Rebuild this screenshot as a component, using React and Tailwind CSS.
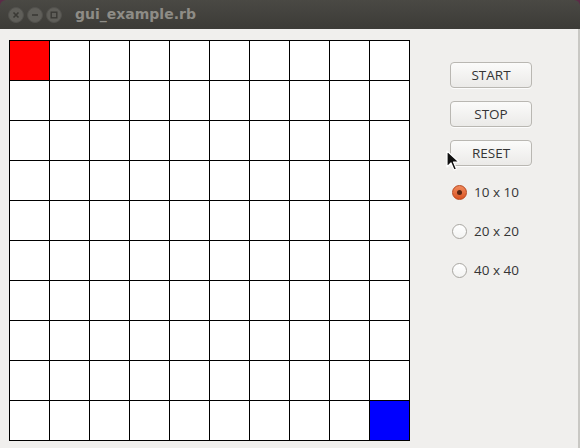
import React, { useState } from 'react';

const SIZE = 10;

function WinButton({ children }) {
  return (
    <div className="w-[16px] h-[16px] rounded-full bg-[#5f5e59] border border-[#52514d] flex items-center justify-center">
      <svg width="8" height="8" viewBox="0 0 8 8" className="text-[#3a3935]">
        {children}
      </svg>
    </div>
  );
}

function Button({ label }) {
  return (
    <button className="w-[82px] h-[26px] rounded-[4px] border border-[#b9b7b2] bg-gradient-to-b from-[#fbfbfa] to-[#ebeae8] text-[13.5px] text-[#353535] shadow-[0_1px_0_rgba(255,255,255,0.8)] flex items-center justify-center">
      {label}
    </button>
  );
}

function Radio({ label, checked, onClick }) {
  return (
    <div className="flex items-center h-[16px] cursor-default" onClick={onClick}>
      <div
        className={
          checked
            ? 'w-[15px] h-[15px] rounded-full bg-gradient-to-b from-[#f08a5c] to-[#d9521f] border border-[#b8451c] flex items-center justify-center'
            : 'w-[15px] h-[15px] rounded-full bg-gradient-to-b from-white to-[#f3f3f2] border border-[#a8a6a1]'
        }
      >
        {checked && <div className="w-[5px] h-[5px] rounded-full bg-[#5a2612]" />}
      </div>
      <span className="ml-[7px] text-[13.5px] text-[#353535]">{label}</span>
    </div>
  );
}

export default function App() {
  const [size, setSize] = useState('10 x 10');
  const cells = [];
  for (let r = 0; r < SIZE; r++) {
    for (let c = 0; c < SIZE; c++) {
      let bg = 'bg-white';
      if (r === 0 && c === 0) bg = 'bg-[#ff0000]';
      if (r === SIZE - 1 && c === SIZE - 1) bg = 'bg-[#0000ff]';
      cells.push(<div key={r + '-' + c} className={`w-[39px] h-[39px] ${bg}`} />);
    }
  }

  return (
    <div className="w-[580px] h-[448px] bg-[#5b2b47] overflow-hidden relative" style={{ fontFamily: '"Open Sans", "DejaVu Sans", sans-serif' }}>
      {/* title bar */}
      <div className="h-[29px] rounded-t-[6px] bg-gradient-to-b from-[#4a4944] to-[#3c3b37] flex items-center pl-[8px]">
        <div className="flex gap-[3px]">
          <WinButton>
            <path d="M1.5 1.5 L6.5 6.5 M6.5 1.5 L1.5 6.5" stroke="currentColor" strokeWidth="1.6" />
          </WinButton>
          <WinButton>
            <path d="M1 4 L7 4" stroke="currentColor" strokeWidth="1.6" />
          </WinButton>
          <WinButton>
            <rect x="1.2" y="1.2" width="5.6" height="5.6" fill="none" stroke="currentColor" strokeWidth="1.4" />
          </WinButton>
        </div>
        <span className="ml-[13px] text-[14px] font-bold text-[#8e8c86]" style={{ fontFamily: '"DejaVu Sans", sans-serif' }}>
          gui_example.rb
        </span>
      </div>

      {/* content */}
      <div className="h-[419px] bg-[#f0efed] border-r-2 border-[#c9c8c4] flex pl-[9px] pt-[11px]">
        <div className="grid grid-cols-10 gap-px p-px bg-black self-start">{cells}</div>

        <div className="ml-[40px] pt-[22px] flex flex-col">
          <div className="flex flex-col gap-[13px]">
            <Button label="START" />
            <Button label="STOP" />
            <Button label="RESET" />
          </div>
          <div className="mt-[18px] ml-[2px] flex flex-col gap-[23px]">
            {['10 x 10', '20 x 20', '40 x 40'].map((l) => (
              <Radio key={l} label={l} checked={size === l} onClick={() => setSize(l)} />
            ))}
          </div>
        </div>
      </div>

      {/* mouse pointer */}
      <svg className="absolute left-[446px] top-[150px]" width="14" height="22" viewBox="0 0 14 22">
        <path d="M1 1 L1 17 L5 13 L8 20 L10.5 19 L7.5 12 L13 12 Z" fill="#111" stroke="#fff" strokeWidth="1.2" strokeLinejoin="round" />
      </svg>
    </div>
  );
}
